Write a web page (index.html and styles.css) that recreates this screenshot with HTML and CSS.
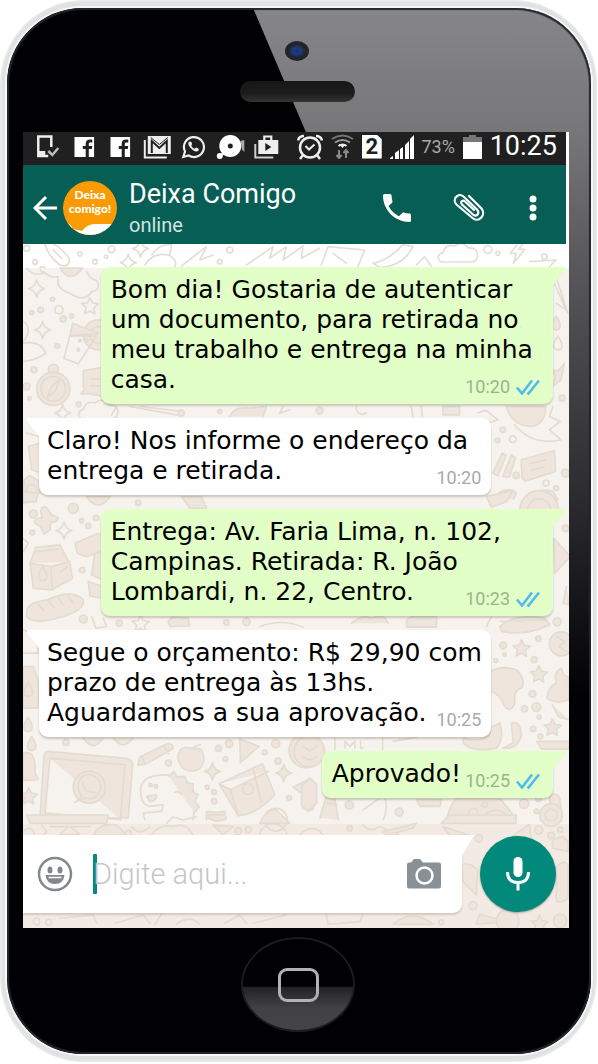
FILE: index.html
```html
<!DOCTYPE html>
<html lang="pt-BR">

<head>
    <meta charset="utf-8">
    <meta name="viewport" content="width=device-width, initial-scale=1">
    <title>Deixa Comigo</title>
    <link rel="stylesheet" href="styles.css">
</head>

<body>
    <svg class="defs" aria-hidden="true">
        <defs>
            <symbol id="ticks" viewBox="0 0 24 16">
                <path d="M1 8.500l5 6L16 1.500M11.500 13.500l1 1L23 1.500" fill="none" stroke="#4fbcec" stroke-width="2.600" />
            </symbol>
            <symbol id="facebook" viewBox="0 0 20 20">
                <path d="M0 0h20v20h-5.500v-8h3l.5-3h-3.500V7.200c0-1 .4-1.600 1.700-1.600H18V2.700c-.6-.1-1.400-.2-2.300-.2-2.700 0-4.300 1.500-4.300 4.300V9H8.500v3h2.900v8H0z" fill="#fff" />
            </symbol>
            <path id="sparkle" d="M0-26Q4-5 24 0Q4 5 0 26Q-4 5-24 0Q-4-5 0-26Z" />
            <path id="star" d="M0-25L8-8L26-5L12 7L15 25L0 16L-16 24L-12 6L-25-6L-7-8Z" />
            <path id="cloud" d="M-55 22Q-72 2-46-8Q-40-34-12-26Q10-44 28-20Q60-22 55 8Q52 22 34 22Z" />
            <path id="bolt" d="M8-34L-22 4L-4 4L-12 34L22-8L4-8L18-30Z" />
            <path id="drop" d="M0-22Q18 4 10 16Q0 24-10 16Q-18 4 0-22Z" />
            <path id="pencil" d="M-52 12L30-28Q46-30 48-14L-36 34L-58 36ZM-36 34L-46 10M34 2L20-22" />
        </defs>
    </svg>

    <div class="phone">
        <div class="case">
            <div class="bezel-top">
                <span class="camera"></span>
                <span class="speaker"></span>
            </div>

            <main class="screen">
                <div class="status">
                    <div class="status-apps">
                        <svg width="22" height="23" viewBox="0 0 22 23" fill="none" stroke="#eee" stroke-width="2.500"><path d="M15 12V1.500H2V21h10" /><path d="M2 18.500h7" stroke-width="5" /><path d="M12 16l4 4 6-7" stroke="#bbb" /></svg>
                        <svg width="20" height="20" viewBox="0 0 20 20"><use href="#facebook" width="20" height="20" /></svg>
                        <svg width="20" height="20" viewBox="0 0 20 20"><use href="#facebook" width="20" height="20" /></svg>
                        <svg width="27" height="24" viewBox="0 0 27 24" fill="none" stroke="#eee"><path d="M1 5v17.500h22" stroke-width="2" /><path d="M4 1h23v18H4z" fill="#eee" stroke="none" /><path d="M8 18V6l7.500 7L23 6v12" stroke="#202020" stroke-width="2" /><path d="M7 2.500l8.500 7 8.500-7" stroke="#202020" stroke-width="1" /></svg>
                        <svg width="24" height="24" viewBox="0 0 24 24"><path d="M2 22l1.700-5.500A10 10 0 1 1 7.300 20.500z" fill="none" stroke="#eee" stroke-width="2.200" /><path d="M8.500 6.500c-2.500 1-1.500 4 .8 6.500s6 4.800 8 2.500c.8-1.500-.1-2-2.300-3-1 0-1 1.500-1.700 1.300-1.500-.6-2.800-1.900-3.300-3.300 0-.7 1.200-1 .8-1.800-.8-2-1.200-2.300-2.300-2.200z" fill="#eee" /></svg>
                        <svg width="28" height="24" viewBox="0 0 28 24" fill="#fff"><circle cx="14" cy="11" r="11" /><circle cx="14" cy="11" r="2.500" fill="#202020" /><circle cx="3.500" cy="21" r="3" /><path d="M5 18l3 1-3 3z" /><path d="M24 6l4-1v12l-2-2z" fill="#aaa" /></svg>
                        <svg width="24" height="24" viewBox="0 0 24 24"><path d="M1 9v13.500h18" fill="none" stroke="#ccc" stroke-width="2" /><path d="M10 5V1.500h7V5" fill="none" stroke="#eee" stroke-width="2.200" /><path d="M4 5h20v14H4z" fill="#eee" /><path d="M11 8l6 4-6 4z" fill="#202020" /></svg>
                    </div>
                    <div class="status-info">
                        <svg width="26" height="26" viewBox="0 0 26 26" fill="none" stroke="#eee" stroke-width="2.500"><circle cx="13" cy="13.500" r="10" /><path d="M8.500 12l3.500 3.500 5.500-5" stroke-width="2" /><path d="M1 6.500Q2 2 7 2M25 6.500Q24 2 19 2M6 21l-3 4M20 21l3 4" /></svg>
                        <svg width="23" height="25" viewBox="0 0 23 25" fill="none" stroke-width="2"><path d="M1 5q10.500-7 21 0" stroke="#777" /><path d="M4 8.500q7.500-5 15 0" stroke="#999" /><path d="M7.500 12q4-3 8 0" stroke="#eee" /><path d="M8 10h7l-3.500 4z" fill="#eee" /><path d="M8 16v8m-2.500-3L8 24l2.500-3M15 24v-8m-2.500 3l2.500-3 2.500 3" stroke="#888" /></svg>
                        <span class="sim">2</span>
                        <svg width="24" height="24" viewBox="0 0 24 24" fill="#fff"><path d="M0 24v-1l3-2v3zM5 24v-6l4-3v9zM10 24V14l3-2v12zM15 24v-14l4-4v18zM20 24V4l4-4v24z" /></svg>
                        <span class="battery-level">73%</span>
                        <svg width="19" height="24" viewBox="0 0 19 24"><path d="M6 0h7v2h6v5H0V2h6z" fill="#777" /><path d="M0 7h19v17H0z" fill="#fff" /></svg>
                        <time class="clock">10:25</time>
                    </div>
                </div>

                <header class="header">
                    <button type="button" class="icon-btn back" aria-label="Voltar">
                        <svg width="24" height="24" viewBox="0 0 24 24" fill="none" stroke="#fff" stroke-width="3"><path d="M24 12H2M13 1L2 12l11 11" /></svg>
                    </button>
                    <div class="avatar">
                        <svg class="avatar-shape" viewBox="0 0 54 54" aria-hidden="true"><path d="M4 42q4 1 6 6l9 2q5-7 13-7l22 0v12H0V42z" fill="#fff" /></svg>
                        <span class="avatar-text">Deixa<br>comigo!</span>
                    </div>
                    <div class="contact">
                        <h1 class="contact-name">Deixa Comigo</h1>
                        <p class="contact-status">online</p>
                    </div>
                    <div class="actions">
                        <button type="button" class="icon-btn" aria-label="Ligar">
                            <svg width="28" height="28" viewBox="3 3 18 18" fill="#fff"><path d="M6.620 10.790c1.440 2.830 3.760 5.140 6.590 6.590l2.200-2.200c.27-.27.67-.36 1.020-.24 1.120.37 2.330.57 3.570.57.55 0 1 .45 1 1V20c0 .55-.45 1-1 1-9.390 0-17-7.610-17-17 0-.55.45-1 1-1h3.500c.55 0 1 .45 1 1 0 1.250.2 2.450.57 3.570.11.35.03.74-.25 1.020z" /></svg>
                        </button>
                        <button type="button" class="icon-btn" aria-label="Anexar">
                            <svg width="32" height="30" viewBox="0 0 32 30" fill="none" stroke="#fff" stroke-width="2.200" stroke-linecap="round"><path d="M16 3l12.500 12.500c5 6-2.500 15-9 9.500L3.500 11.500c-5-5 1.500-12.500 7-8L24 16.500c3.500 4-1 8-4 5L9 11.500c-2-2.500.5-5 3-3l9 8.500" /></svg>
                        </button>
                        <button type="button" class="icon-btn" aria-label="Mais opções">
                            <svg width="12" height="26" viewBox="0 0 12 26" fill="#fff"><circle cx="6" cy="4" r="3.500" /><circle cx="6" cy="13" r="3.500" /><circle cx="6" cy="22" r="3.500" /></svg>
                        </button>
                    </div>
                </header>

                <div class="conversation">
                    <!-- papel de parede -->
                    <svg class="wallpaper" viewBox="0 0 546 684" preserveAspectRatio="xMinYMin slice" aria-hidden="true">
                        <rect width="546" height="684" fill="#f6f2ed" />
                        <rect y="580" width="546" height="104" fill="#f3eae3" />
                        <rect width="546" height="24" fill="#fff" />
                        <g class="doodle outline" transform="translate(-3 -4) scale(.333)">
                            <path d="M75 12Q85 50 120 75Q150 85 148 55Q120 20 100 12M100 30L125 55" />
                            <circle cx="180" cy="42" r="6" /><circle cx="225" cy="65" r="7" /><circle cx="275" cy="28" r="10" /><circle cx="258" cy="50" r="5" />
                            <use href="#sparkle" x="362" y="26" /><use href="#sparkle" x="325" y="68" />
                            <path d="M375 75Q400 35 445 45Q475 60 465 80M395 45Q420 10 455 14L450 45M485 78L560 20L540 60L580 45" />
                            <path d="M680 75L760 20L750 55L800 20L790 60L850 18L845 55L900 25" />
                            <circle cx="600" cy="65" r="7" /><circle cx="630" cy="30" r="9" /><circle cx="20" cy="25" r="9" /><circle cx="45" cy="66" r="7" />
                            <path d="M905 75L925 20L1035 30L1015 80M940 40L980 70M1060 70Q1110 60 1150 14L1180 20Q1150 80 1080 82Z" />
                            <path d="M1190 75L1215 50L1235 78" />
                            <use href="#cloud" x="1318" y="44" /><circle cx="1405" cy="28" r="12" /><circle cx="1435" cy="40" r="6" />
                            <use href="#bolt" x="1494" y="36" /><circle cx="1575" cy="50" r="8" />
                            <path d="M1530 65L1610 60L1590 80" />
                        </g>
                        <g class="doodle" transform="translate(-3 -4) scale(.333)">
                            <path class="plain" d="M20 85Q40 110 68 100Q50 75 75 82M70 95Q90 115 115 110Q105 145 150 160Q195 190 215 155Q245 150 230 122Q210 118 200 95" />
                            <path d="M120 84Q150 135 188 84Z" />
                            <use class="plain" href="#sparkle" x="50" y="146" /><use class="plain" href="#star" x="210" y="197" /><use class="plain" href="#sparkle" x="68" y="270" />
                            <circle cx="98" cy="178" r="6" /><circle cx="62" cy="210" r="8" /><circle cx="35" cy="218" r="6" /><circle class="plain" cx="117" cy="210" r="12" /><circle cx="130" cy="237" r="9" /><circle cx="155" cy="228" r="6" />
                            <path class="plain" d="M10 245Q40 265 10 305M10 310Q60 300 78 340Q50 360 10 365" />
                            <circle cx="235" cy="285" r="45" /><circle cx="235" cy="285" r="25" />
                            <path d="M158 250L235 280L150 288Z" /><path class="plain" d="M150 288L230 288L175 372L132 355Z" />
                            <circle cx="180" cy="302" r="4" /><circle cx="200" cy="300" r="4" /><circle cx="175" cy="330" r="4" /><circle cx="112" cy="318" r="7" />
                            <circle cx="100" cy="388" r="15" /><circle cx="100" cy="447" r="50" /><circle class="plain" cx="100" cy="447" r="37" /><path d="M118 420L106 454L82 472L94 440Z" />
                            <path d="M190 392L250 382V470L210 462L182 462Q198 450 190 440ZM210 418H245M210 438H245" />
                            <circle cx="42" cy="390" r="9" /><circle cx="20" cy="440" r="10" /><circle cx="28" cy="475" r="5" /><circle cx="176" cy="493" r="7" />
                            <use class="plain" href="#cloud" x="238" y="515" /><use class="plain" href="#sparkle" x="128" y="520" />
                            <path d="M290 500L275 525M330 500L470 525M360 500L490 515M630 530Q640 500 690 505L740 500L730 530" /><circle cx="484" cy="520" r="9" /><circle cx="600" cy="515" r="6" />
                            <path d="M20 580L55 590M25 620L60 610L62 700L35 690ZM12 720L30 708L55 722L60 760L10 775Z" /><circle cx="35" cy="750" r="16" />
                            <path class="plain" d="M790 500L780 520L810 510M1010 500Q1010 530 1040 520M1175 500L1180 530M1205 498L1208 530" />
                            <circle cx="900" cy="512" r="10" /><path d="M1270 500H1320V525H1270Z" />
                            <path class="plain" d="M1605 130L1640 210L1610 190M1610 110L1645 220" /><use href="#drop" x="1610" y="250" /><use class="plain" href="#drop" x="1615" y="310" />
                            <path d="M1635 370L1615 395L1600 390L1608 412L1598 440L1625 420Z" /><circle cx="1628" cy="475" r="9" />
                            <path d="M1460 500H1580Q1575 560 1530 560Q1475 555 1460 500Z" /><path class="plain" d="M1485 555Q1540 620 1625 600L1590 570L1622 545L1590 530L1600 500" />
                            <path class="plain" d="M1375 520Q1400 505 1410 520L1435 540L1410 548" />
                            <circle cx="1450" cy="570" r="8" /><circle cx="1434" cy="602" r="7" /><circle class="plain" cx="1480" cy="598" r="10" />
                            <path d="M1420 700L1448 640L1460 648L1435 708ZM1450 710L1475 645L1488 654L1470 712Z" /><circle cx="1490" cy="707" r="9" />
                            <path d="M1505 660L1605 632L1608 695L1518 724L1508 716ZM1530 672L1580 660M1532 692L1574 682" /><circle cx="1638" cy="700" r="12" /><circle class="plain" cx="1580" cy="730" r="9" /><circle cx="1610" cy="745" r="7" />
                            <path d="M1420 775Q1460 735 1490 760L1482 778M1520 780Q1550 740 1600 755L1615 780" />
                        </g>
                        <g class="doodle" transform="translate(-3 246) scale(.333)">
                            <path d="M10 5L55 10L48 35L10 38ZM200 20Q235 70 270 20ZM485 20L510 55H560L545 20Z" /><circle cx="355" cy="38" r="8" /><circle cx="160" cy="55" r="15" /><circle cx="40" cy="72" r="12" /><circle cx="37" cy="128" r="7" /><circle cx="185" cy="92" r="6" /><circle cx="205" cy="108" r="8" /><circle cx="228" cy="84" r="8" />
                            <path d="M62 62Q70 40 84 58L92 72L115 84Q110 100 92 96L90 120L72 132L62 110L45 100Q40 84 66 84Z" />
                            <use class="plain" href="#sparkle" x="132" y="122" /><path class="plain" d="M10 145L25 160L10 185" />
                            <path d="M48 172L120 165L150 222L158 265L95 300L40 295L30 220ZM30 220L92 230L150 215M92 230L98 300M48 185L115 178" /><use href="#drop" x="68" y="252" /><path d="M122 245L142 232" />
                            <path d="M165 160L235 130L260 138V180L200 200L172 190ZM225 190L250 180V270L215 255ZM205 275L250 290V325L210 318Z" /><circle cx="187" cy="240" r="8" />
                            <path d="M20 365Q20 340 80 330Q160 295 190 330Q195 365 110 385Q45 405 20 380ZM55 345L72 362M85 333L102 354M115 325L130 345M145 318L158 338" />
                            <path class="plain" d="M215 380L228 415L260 410L250 385" /><circle cx="190" cy="388" r="12" /><circle cx="298" cy="400" r="9" /><use class="plain" href="#star" x="362" y="400" /><path d="M445 395L455 382L505 385L510 408L450 410Z" /><circle cx="620" cy="398" r="8" /><circle cx="680" cy="396" r="11" />
                            <path class="plain" d="M10 420Q50 430 55 490H10M720 410Q790 385 850 412" /><path d="M10 530H40L55 575V655H10Z" /><use href="#drop" x="25" y="600" />
                            <use href="#drop" x="24" y="705" /><use href="#drop" x="35" y="762" /><circle cx="138" cy="758" r="9" /><path d="M190 745Q220 790 250 745M280 745Q310 785 340 745" />
                            <path d="M10 790Q50 780 45 850L55 870L10 872Z" /><use href="#star" x="26" y="918" />
                            <path d="M82 785L320 806Q340 812 338 830L325 985H60L72 800Q74 788 82 785ZM90 805L315 825L302 985M90 805L75 970L302 990" />
                            <circle cx="208" cy="893" r="48" /><path d="M185 920Q160 880 195 855Q235 850 243 892Q235 935 195 925L165 938L185 920M190 875Q185 910 228 908" />
                            <use href="#pencil" x="412" y="790" /><circle cx="446" cy="820" r="9" />
                            <path d="M515 776Q480 765 474 800Q480 845 515 844Q550 845 552 805Q550 768 520 778Q515 770 542 765" />
                            <path class="plain" d="M362 900Q365 860 420 856Q500 852 520 900Q525 950 520 990M362 900Q362 945 390 950L430 945L425 965L370 970L375 990" /><circle cx="392" cy="886" r="5" /><circle cx="408" cy="890" r="5" /><path d="M380 920L410 915Q412 935 390 936ZM448 860L462 845L472 862L495 860L500 880L520 882L518 905L535 915L524 935L538 952L524 970" /><path d="M465 908Q478 900 484 914" />
                            <path d="M660 748L718 770L662 818Z" /><circle cx="628" cy="762" r="11" /><circle cx="596" cy="776" r="9" /><circle cx="768" cy="762" r="12" /><circle cx="735" cy="788" r="7" /><circle cx="617" cy="808" r="7" />
                            <use href="#sparkle" x="578" y="845" /><use href="#sparkle" x="792" y="850" />
                            <path d="M598 882L728 822L765 915Q710 975 655 978ZM598 882L632 900L745 845M632 900L655 978M700 835L725 940" /><circle cx="684" cy="898" r="16" />
                            <circle cx="583" cy="907" r="7" /><circle cx="583" cy="935" r="8" /><circle cx="562" cy="893" r="6" />
                            <circle cx="860" cy="782" r="52" /><path d="M830 770Q836 755 846 768L838 782ZM870 770Q880 755 886 770L878 782ZM840 802Q860 825 884 800Z" />
                            <path d="M820 892L870 868L880 885L840 908ZM850 920L880 905V960L860 958ZM560 990V965L590 968L615 965V990" /><circle class="plain" cx="768" cy="990" r="34" /><circle cx="775" cy="814" r="9" /><circle cx="808" cy="925" r="7" />
                        </g>
                        <g class="doodle" transform="translate(277 246) scale(.333)">
                            <path d="M560 20L640 0L620 35L575 52Z" /><circle cx="718" cy="60" r="58" /><circle cx="718" cy="60" r="34" /><circle cx="798" cy="115" r="10" />
                            <path d="M762 145L812 200L765 250ZM800 290L790 340L812 345" />
                            <path d="M155 400Q190 370 210 385L250 378L265 400M320 390L335 380H410V412H320ZM560 410L575 380" />
                            <path d="M600 410Q640 370 735 385L750 405Q680 440 605 425ZM600 395L740 390" /><circle cx="772" cy="396" r="12" /><circle cx="716" cy="447" r="8" />
                            <use href="#star" x="665" y="474" /><circle cx="785" cy="462" r="36" /><path class="plain" d="M770 440L795 455L778 470L800 485" />
                            <circle cx="610" cy="467" r="10" /><circle cx="588" cy="512" r="6" /><circle cx="614" cy="494" r="5" /><circle cx="703" cy="510" r="9" /><use href="#star" x="717" y="552" />
                            <path d="M570 545Q610 525 650 540Q680 570 665 595Q640 600 645 640Q632 672 615 650Q600 610 570 605Z" />
                            <path d="M742 625Q745 590 770 580Q760 545 785 535Q790 560 806 562L808 630Q770 645 742 625ZM758 645L775 680L806 690" />
                            <circle cx="674" cy="657" r="9" /><circle cx="710" cy="652" r="13" /><circle cx="698" cy="612" r="10" /><circle cx="718" cy="682" r="6" /><circle cx="700" cy="718" r="8" /><use href="#star" x="758" y="712" />
                            <path d="M490 760Q520 790 590 775Q615 745 600 700L575 712L568 735Q540 760 490 745ZM635 700Q660 690 665 735Q655 780 610 775L640 760Z" />
                            <path class="plain" d="M105 745V780M248 745V780M280 755L350 742M135 775V755L150 770L165 755V775M182 755V775H190" /><circle cx="28" cy="785" r="46" /><path d="M10 770L30 785L50 768M8 800Q28 820 50 800" />
                            <path d="M712 755H808V778H725Z" /><circle cx="722" cy="740" r="7" />
                            <path d="M5 890L30 865L50 885V940L25 965L5 950ZM60 985L75 930L100 900L115 990M80 940L110 945" />
                            <circle cx="148" cy="946" r="12" /><path class="plain" d="M190 960L240 925M255 920Q265 960 250 990" /><circle cx="298" cy="967" r="12" />
                            <path d="M350 930H425L420 950H360ZM440 990Q455 930 475 925H600L640 975L650 990ZM750 920Q770 905 780 925L785 970Q770 995 752 975Z" /><circle cx="520" cy="970" r="14" /><circle cx="555" cy="945" r="8" /><circle cx="673" cy="942" r="14" /><circle cx="716" cy="928" r="8" /><circle cx="710" cy="965" r="7" />
                        </g>
                        <g class="doodle" transform="translate(-23 571) scale(.333)">
                            <path d="M80 0L90 25H320L325 0ZM620 0Q640 30 680 10L675 0ZM780 25Q800 -20 830 -15L870 25Z" />
                            <path class="plain" d="M75 45Q95 30 105 60M125 30L140 50L130 60M150 35H205L180 58H240L210 35H270M395 35Q420 65 450 35M455 60Q480 25 520 35Q560 20 580 60M500 25L520 5L550 15L590 5" />
                            <path d="M280 60Q300 20 350 30L380 60ZM640 30L700 35L670 60Z" /><circle cx="715" cy="48" r="10" /><circle cx="745" cy="44" r="9" /><circle class="plain" cx="820" cy="68" r="42" /><circle cx="385" cy="55" r="9" />
                            <path class="plain" d="M900 60Q940 20 970 60M1090 30Q1110 55 1140 35L1200 60" /><path d="M1150 50L1250 25L1240 40L1165 60ZM1325 25L1350 0H1550V25ZM1455 0Q1490 -30 1520 0M1330 35L1410 60H1350Z" /><circle cx="1050" cy="40" r="8" />
                            <circle cx="1655" cy="0" r="34" /><circle cx="1655" cy="0" r="18" /><circle cx="1438" cy="70" r="11" /><path d="M1540 62L1590 28L1594 72ZM1660 100Q1650 70 1690 65L1706 80V110ZM1385 150Q1410 140 1435 165L1430 240L1390 200ZM1670 160Q1690 130 1706 150V250Q1660 280 1672 230Z" />
                            <circle cx="1618" cy="45" r="12" /><circle cx="1655" cy="62" r="10" /><circle cx="1682" cy="44" r="8" />
                            <path class="plain" d="M180 310L280 300L290 325M345 325L430 300L450 325M465 328L485 298M530 328Q570 298 600 328M675 325L720 300L740 325M760 325L860 300M980 300L985 328L1080 320L1090 300" />
                            <circle class="plain" cx="110" cy="320" r="10" /><circle class="plain" cx="146" cy="322" r="9" /><path d="M1180 328Q1240 280 1300 328ZM1430 328L1440 298L1520 320Z" /><circle cx="1325" cy="322" r="7" /><circle cx="1420" cy="272" r="12" /><circle cx="1525" cy="318" r="34" /><use href="#star" x="1620" y="325" /><circle cx="1682" cy="318" r="20" />
                        </g>
                    </svg>

                    <section class="messages" aria-label="Mensagens">
                        <article class="bubble sent">
                            <p class="text">Bom dia! Gostaria de autenticar um documento, para retirada no meu trabalho e entrega na minha casa.</p>
                            <footer class="meta"><time>10:20</time><svg class="ticks"><use href="#ticks" /></svg></footer>
                        </article>
                        <article class="bubble received">
                            <p class="text">Claro! Nos informe o endereço da entrega e retirada.</p>
                            <footer class="meta"><time>10:20</time></footer>
                        </article>
                        <article class="bubble sent">
                            <p class="text">Entrega: Av. Faria Lima, n. 102, Campinas. Retirada: R. João Lombardi, n. 22, Centro.</p>
                            <footer class="meta"><time>10:23</time><svg class="ticks"><use href="#ticks" /></svg></footer>
                        </article>
                        <article class="bubble received">
                            <p class="text">Segue o orçamento: R$ 29,90 com prazo de entrega às 13hs. Aguardamos a sua aprovação.</p>
                            <footer class="meta"><time>10:25</time></footer>
                        </article>
                        <article class="bubble sent short">
                            <p class="text">Aprovado!</p>
                            <footer class="meta"><time>10:25</time><svg class="ticks"><use href="#ticks" /></svg></footer>
                        </article>
                    </section>

                    <form class="composer">
                        <div class="field">
                            <button type="button" class="icon-btn" aria-label="Emoji">
                                <svg width="36" height="36" viewBox="0 0 36 36" fill="#82898d"><circle cx="18" cy="18" r="16" fill="none" stroke="#82898d" stroke-width="2.500" /><ellipse cx="13" cy="14" rx="2.500" ry="3.500" /><ellipse cx="23" cy="14" rx="2.500" ry="3.500" /><path d="M8.500 19h19q-1 9-9.500 9t-9.500-9z" /><path d="M11.500 21.500h13" stroke="#fff" stroke-width="1.500" /></svg>
                            </button>
                            <span class="caret"></span>
                            <input class="message-input" type="text" placeholder="Digite aqui..." aria-label="Mensagem">
                            <button type="button" class="icon-btn" aria-label="Câmera">
                                <svg width="36" height="32" viewBox="0 0 36 32"><path d="M3 4.500h2L8 1h6l3 3.500h16q2 0 2 2v22q0 2-2 2H3q-2 0-2-2v-22q0-2 2-2z" fill="#8a9196" /><circle cx="18.500" cy="17.500" r="8" fill="#8a9196" stroke="#fff" stroke-width="2.500" /></svg>
                            </button>
                        </div>
                        <button type="button" class="mic" aria-label="Gravar áudio">
                            <svg width="24" height="34" viewBox="0 0 24 34"><rect x="7.500" width="9" height="20" rx="4.500" fill="#fff" /><path d="M1.500 15q0 10.500 10.500 10.500T22.500 15M12 25v8.500" fill="none" stroke="#fff" stroke-width="3" /></svg>
                        </button>
                    </form>
                </div>
            </main>

            <div class="bezel-bottom">
                <button type="button" class="home" aria-label="Início"><span class="home-mark"></span></button>
            </div>
        </div>
    </div>
</body>

</html>
```
FILE: styles.css
```css
* {
    box-sizing: border-box;
}

body {
    margin: 0;
    background-color: #fff;
    font-family: Roboto, "Liberation Sans", sans-serif;
}

h1,
p {
    margin: 0;
}

button {
    padding: 0;
    border: none;
    background: none;
    cursor: pointer;
}

svg {
    display: block;
    flex: none;
}

.defs {
    position: absolute;
    width: 0;
    height: 0;
}

/* corpo do aparelho */
.phone {
    padding: 6px 4px 6px 5px;
    margin-right: 1px;
    border-radius: 84px;
    background-color: #dfe2e0;
    box-shadow: inset 0 0 3px #fff;
}

.case {
    position: relative;
    overflow: hidden;
    padding: 0 22px 0 16px;
    border: 2px solid #f6f8f7;
    border-radius: 78px;
    background-color: #010104;
}

/* reflexo do vidro */
.case::before {
    content: "";
    position: absolute;
    inset: 0;
    background: linear-gradient(#868688 0, #777779 124px, #5c5c5e 240px, #29292e 500px, #010104 690px);
    clip-path: polygon(246px 0, 100% 0, 100% 100%, 540px 690px);
}

.case::after {
    content: "";
    position: absolute;
    inset: 0;
    border-radius: 76px;
    box-shadow: inset 0 0 1px 2px #23272d;
    pointer-events: none;
}

.bezel-top {
    position: relative;
    display: flex;
    flex-direction: column;
    align-items: center;
    gap: 20px;
    height: 124px;
    padding: 33px 0 0 2px;
}

.camera {
    width: 24px;
    height: 20px;
    border-radius: 50%;
    background: radial-gradient(ellipse, #142c6e 0, #1f3d80 20%, #22242c 50%, #222 100%);
}

.speaker {
    width: 115px;
    height: 21px;
    border-radius: 11px;
    background: linear-gradient(#171717, #1c1c1c 60%, #343434);
}

.bezel-bottom {
    display: flex;
    justify-content: center;
    padding: 9px 0 22px 4px;
}

.home {
    display: flex;
    align-items: center;
    justify-content: center;
    width: 114px;
    height: 95px;
    border: 2px solid #1c1c1f;
    border-radius: 50%;
    background: linear-gradient(#010104 52%, #222226 53%, #414045 75%, #444347);
}

.home-mark {
    width: 41px;
    height: 34px;
    border: 3px solid #b2b2b4;
    border-radius: 9px;
}

.screen {
    position: relative;
    background-color: #fff;
}

/* barra de status */
.status {
    display: flex;
    align-items: center;
    justify-content: space-between;
    height: 33px;
    margin-right: 3px;
    padding: 0 9px 4px 6px;
    background-color: #202020;
    color: #fff;
}

.status-apps {
    display: flex;
    align-items: center;
    width: 256px;
}

.status-apps svg {
    flex: 1;
}

.status-info {
    display: flex;
    align-items: center;
    justify-content: space-between;
    width: 260px;
}

.sim {
    width: 20px;
    height: 24px;
    background-color: #fff;
    clip-path: polygon(0 0, 75% 0, 100% 20%, 100% 100%, 0 100%);
    color: #202020;
    font-size: 22px;
    font-weight: 700;
    line-height: 24px;
    text-align: center;
}

.battery-level {
    color: #aaa;
    font-size: 18px;
}

.clock {
    font-size: 27px;
    line-height: 29px;
}

/* cabeçalho */
.header {
    display: flex;
    align-items: center;
    height: 79px;
    margin-right: 3px;
    padding: 0 27px 0 10px;
    background-color: #075e54;
    color: #fff;
}

.icon-btn {
    flex: none;
}

.back {
    margin: 6px 6px 0 0;
}

.avatar {
    position: relative;
    flex: none;
    overflow: hidden;
    width: 54px;
    height: 54px;
    margin: 6px 12px 0 0;
    padding-top: 7px;
    border-radius: 50%;
    background-color: #fb9b04;
    text-align: center;
}

.avatar-shape {
    position: absolute;
    inset: 0;
}

.avatar-text {
    position: relative;
    display: block;
    font: 900 12px/14px Lato, sans-serif;
}

.contact {
    flex: 1;
    min-width: 0;
    padding-top: 6px;
}

.contact-name {
    font-size: 27px;
    font-weight: 400;
    line-height: 34px;
    white-space: nowrap;
}

.contact-status {
    color: #d3e3e1;
    font-size: 20px;
    line-height: 28px;
}

.actions {
    display: flex;
    align-items: center;
    gap: 42px;
    padding-top: 6px;
}

/* conversa */
.conversation {
    position: relative;
    overflow: hidden;
}

.wallpaper {
    position: absolute;
    inset: 0;
    width: 100%;
    height: 100%;
}

.doodle {
    fill: #efe5dc;
    stroke: #e3dcd1;
    stroke-width: 5;
    stroke-linejoin: round;
    stroke-linecap: round;
}

.plain {
    fill: none;
}

.outline {
    fill: none;
    stroke: #e3dfd3;
}

.messages {
    position: relative;
    display: flex;
    flex-direction: column;
    gap: 14px;
    padding: 23px 16px 37px;
}

.bubble {
    position: relative;
    max-width: 88%;
    padding: 8px 8px 9px;
    border-radius: 9px;
    box-shadow: 0 2px 2px rgba(80, 70, 50, .25);
}

.sent {
    align-self: flex-end;
    padding-left: 10px;
    border-top-right-radius: 0;
    background-color: #e1ffc7;
}

.received {
    align-self: flex-start;
    border-top-left-radius: 0;
    background-color: #fff;
}

.short {
    padding-right: 92px;
}

/* ponta do balão */
.bubble::before {
    content: "";
    position: absolute;
    top: 0;
    width: 13px;
    height: 18px;
    background-color: inherit;
}

.sent::before {
    right: -12px;
    clip-path: polygon(0 0, 100% 0, 100% 15%, 1px 100%, 0 100%);
}

.received::before {
    left: -12px;
    clip-path: polygon(0 0, 100% 0, 100% 100%, 12px 100%, 0 15%);
}

.text {
    color: #000;
    font: 25px/30px "DejaVu Sans", sans-serif;
}

.meta {
    position: absolute;
    right: 10px;
    bottom: 6px;
    display: flex;
    align-items: center;
    gap: 6px;
    color: #aaa;
    font-size: 18px;
    line-height: 22px;
}

.sent .meta {
    right: 13px;
    color: #9db38c;
}

.ticks {
    width: 24px;
    height: 16px;
}

/* campo de mensagem */
.composer {
    position: relative;
    display: flex;
    align-items: center;
    gap: 18px;
    padding: 0 13px 15px 0;
}

.field {
    position: relative;
    display: flex;
    align-items: center;
    flex: 1;
    min-width: 0;
    height: 78px;
    padding: 0 20px 0 14px;
    border-radius: 0 0 9px 0;
    background-color: #fff;
    box-shadow: 0 2px 2px rgba(80, 70, 50, .2);
}

.field::after {
    content: "";
    position: absolute;
    top: 0;
    right: -12px;
    width: 13px;
    height: 21px;
    background-color: #fff;
    clip-path: polygon(0 0, 100% 0, 1px 100%, 0 100%);
}

.caret {
    flex: none;
    width: 4px;
    height: 40px;
    margin-left: 20px;
    border-radius: 1px;
    background-color: #078a7b;
}

.message-input {
    flex: 1;
    min-width: 0;
    margin-left: -4px;
    padding: 0;
    border: none;
    outline: none;
    background: none;
    font: 300 29px/36px Roboto, sans-serif;
}

.message-input::placeholder {
    color: #c6c6c6;
    opacity: 1;
}

.mic {
    display: flex;
    align-items: center;
    justify-content: center;
    flex: none;
    width: 76px;
    height: 76px;
    border-radius: 50%;
    background-color: #02897b;
    box-shadow: 0 1px 2px rgba(0, 0, 0, .3);
}
```
